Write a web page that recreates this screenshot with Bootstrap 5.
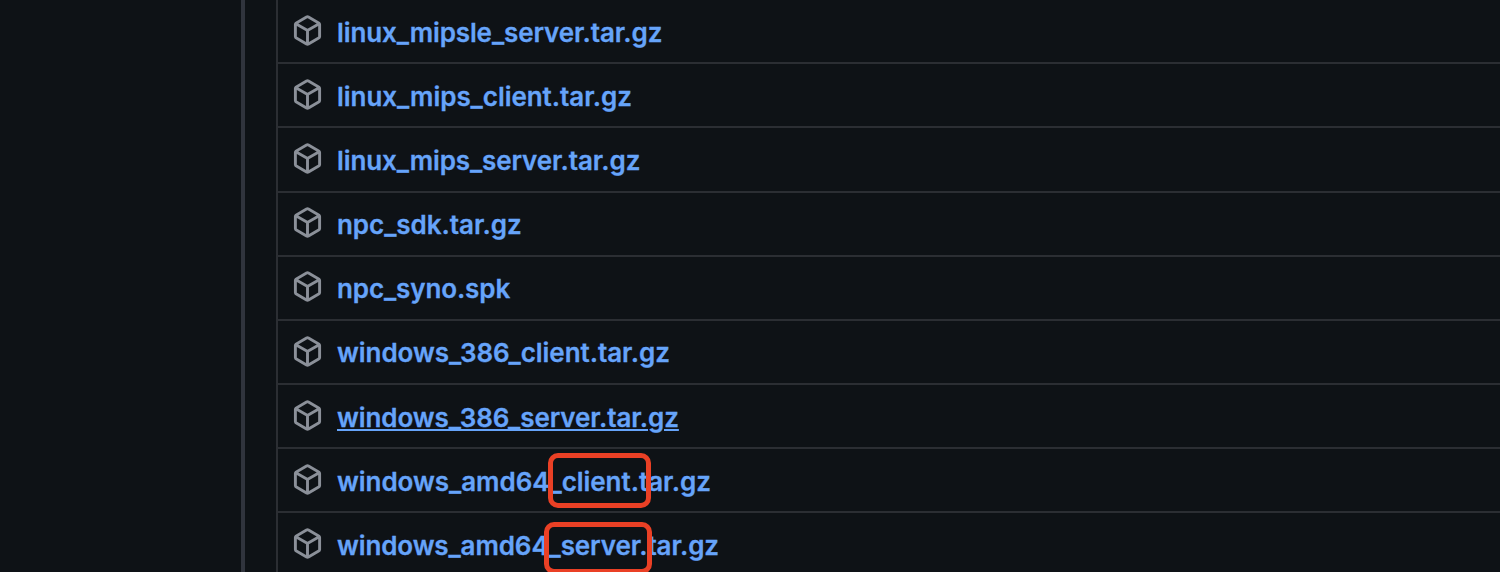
<!DOCTYPE html>
<html lang="en" data-bs-theme="dark">
<head>
<meta charset="utf-8">
<meta name="viewport" content="width=device-width, initial-scale=1">
<title>Release assets</title>
<link href="https://cdn.jsdelivr.net/npm/bootstrap@5.3.0/dist/css/bootstrap.min.css" rel="stylesheet">
<style>
  body { background: #0e1216; font-family: Inter, "Liberation Sans", sans-serif; }
  .page { height: 572px; }
  .gutter { width: 245px; border-right: 4px solid #30343d; }
  .assets { margin-left: 31px; border-left: 2px solid #2b2e33; }
  .asset { height: 64.17px; padding-left: 14px; border-bottom: 2px solid #2b2e33; }
  .asset:first-child { height: 64.3px; }
  .asset svg { width: 31px; height: 31px; fill: #8b9099; margin-top: -2px; }
  .asset a { margin: 2.8px 0 0 14px; color: #66a4fa; font-size: 26px; font-weight: 600; line-height: 40px; letter-spacing: -.04px; white-space: nowrap; -webkit-text-stroke: .3px #66a4fa; }
  .asset a.tight { letter-spacing: -.11px; }
  .asset a.hovered { letter-spacing: -.08px; text-decoration: underline !important; text-decoration-thickness: 2px !important; text-underline-offset: 2px; }
  .marker { border: 5px solid #ea4025; border-radius: 10px; }
  .marker-client { left: 270px; top: 4px; width: 103px; height: 55px; }
  .marker-server { left: 266px; top: 9px; width: 108px; height: 52px; }
</style>
</head>
<body>
<svg class="d-none"><symbol id="package" viewBox="0 0 16 16"><path d="m8.878.392 5.25 3.045c.54.314.872.89.872 1.514v6.098a1.75 1.75 0 0 1-.872 1.514l-5.25 3.045a1.75 1.75 0 0 1-1.756 0l-5.25-3.045A1.75 1.75 0 0 1 1 11.049V4.951c0-.624.332-1.201.872-1.514L7.122.392a1.75 1.75 0 0 1 1.756 0ZM7.875 1.69l-4.63 2.685L8 7.133l4.755-2.758-4.63-2.685a.248.248 0 0 0-.25 0ZM2.5 5.677v5.372c0 .09.047.171.125.216l4.625 2.683V8.432Zm6.25 8.271 4.625-2.683a.25.25 0 0 0 .125-.216V5.677L8.75 8.432Z"/></symbol></svg>
<div class="page d-flex overflow-hidden">
  <div class="gutter flex-shrink-0"></div>
  <ul class="assets list-unstyled flex-grow-1 mb-0">
    <li class="asset d-flex align-items-center"><svg><use href="#package"/></svg><a href="#" class="text-decoration-none tight">linux_mipsle_server.tar.gz</a></li>
    <li class="asset d-flex align-items-center"><svg><use href="#package"/></svg><a href="#" class="text-decoration-none">linux_mips_client.tar.gz</a></li>
    <li class="asset d-flex align-items-center"><svg><use href="#package"/></svg><a href="#" class="text-decoration-none tight">linux_mips_server.tar.gz</a></li>
    <li class="asset d-flex align-items-center"><svg><use href="#package"/></svg><a href="#" class="text-decoration-none">npc_sdk.tar.gz</a></li>
    <li class="asset d-flex align-items-center"><svg><use href="#package"/></svg><a href="#" class="text-decoration-none tight">npc_syno.spk</a></li>
    <li class="asset d-flex align-items-center"><svg><use href="#package"/></svg><a href="#" class="text-decoration-none">windows_386_client.tar.gz</a></li>
    <li class="asset d-flex align-items-center"><svg><use href="#package"/></svg><a href="#" class="hovered">windows_386_server.tar.gz</a></li>
    <li class="asset d-flex align-items-center position-relative"><svg><use href="#package"/></svg><a href="#" class="text-decoration-none">windows_amd64_client.tar.gz</a><span class="marker marker-client position-absolute"></span></li>
    <li class="asset d-flex align-items-center position-relative"><svg><use href="#package"/></svg><a href="#" class="text-decoration-none tight">windows_amd64_server.tar.gz</a><span class="marker marker-server position-absolute"></span></li>
  </ul>
</div>
<script src="https://cdn.jsdelivr.net/npm/bootstrap@5.3.0/dist/js/bootstrap.bundle.min.js"></script>
</body>
</html>
